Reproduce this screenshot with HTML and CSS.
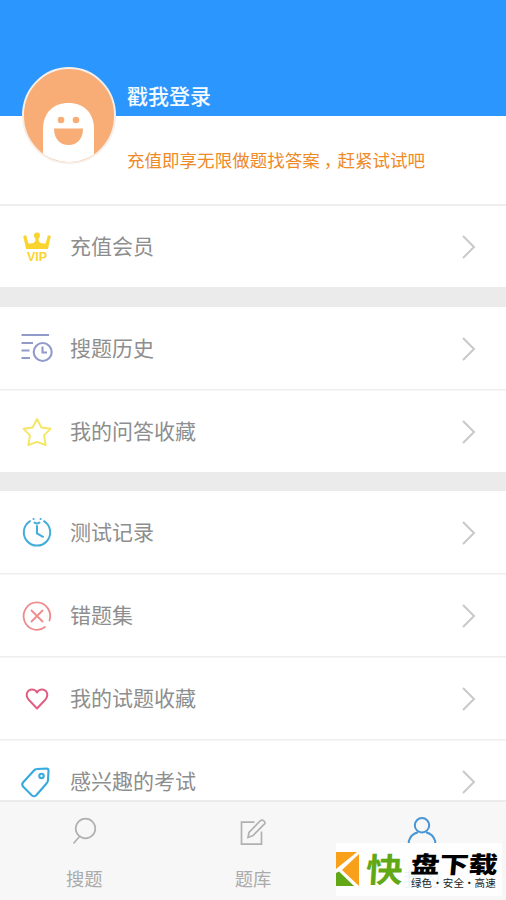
FILE: index.html
```html
<!DOCTYPE html>
<html lang="zh-CN">
<head>
<meta charset="utf-8">
<title>个人中心</title>
<link rel="stylesheet" href="styles.css">
</head>
<body>
<div class="app">
  <header class="profile">
    <svg class="avatar" viewBox="0 0 96 98">
      <defs><clipPath id="face"><ellipse cx="48" cy="48.500" rx="45" ry="46.500"/></clipPath></defs>
      <ellipse cx="48" cy="48.500" rx="46" ry="47.500" fill="#f8ac76" stroke="#f6eee9" stroke-width="2"/>
      <path clip-path="url(#face)" d="M22 98V62C22 46 32 36 47.500 36S73 46 73 62V98Z" fill="#fff"/>
      <circle cx="40" cy="53" r="3.300" fill="#f8ac76"/><circle cx="55" cy="53" r="3.300" fill="#f8ac76"/>
      <path d="M33 61.500H62C62 72 56 78 47.500 78S33 72 33 61.500Z" fill="#f8ac76"/>
    </svg>
    <div class="login">戳我登录</div>
    <div class="promo">充值即享无限做题找答案<span class="comma">，</span>赶紧试试吧</div>
  </header>
  <main class="menu">
    <section class="group">
      <a class="row">
        <svg class="icon" viewBox="0 0 36 36" fill="#fad42e"><path d="M4.500 8l3 0 2 6.500Q16 15 16.500 11L16 7h4l-.5 4Q20 15 26.500 14.500l2-6.500 3 0-2.500 12h-22z"/><circle cx="6" cy="8" r="1.700"/><circle cx="18" cy="6.500" r="3"/><circle cx="30" cy="8" r="1.700"/><text class="vip" x="18" y="31.500" text-anchor="middle">VIP</text></svg>
        <span class="label">充值会员</span><svg class="chevron" viewBox="0 0 14 24"><path d="M1 1l11 11L1 23"/></svg></a>
    </section>
    <section class="group">
      <a class="row">
        <svg class="icon" viewBox="0 0 36 36" fill="none" stroke="#919bcb" stroke-width="2.100"><path d="M2.500 4H30M2.500 12H14M2.500 19.500H10.500M2.500 27H11"/><circle cx="23.700" cy="21" r="9"/><path d="M23.500 15.500V21.500H28"/></svg>
        <span class="label">搜题历史</span><svg class="chevron" viewBox="0 0 14 24"><path d="M1 1l11 11L1 23"/></svg></a>
      <a class="row">
        <svg class="icon" viewBox="0 0 36 36" fill="none" stroke="#f6e562" stroke-width="1.900" stroke-linejoin="round"><path d="M18 5l4.400 8.500 9.100 1.300-6.500 6.600 1.700 9.700-8.700-3.200-8.700 3.200 1.700-9.700-6.500-6.600 9.100-1.300z"/></svg>
        <span class="label">我的问答收藏</span><svg class="chevron" viewBox="0 0 14 24"><path d="M1 1l11 11L1 23"/></svg></a>
    </section>
    <section class="group">
      <a class="row">
        <svg class="icon" viewBox="0 0 36 36" fill="none" stroke="#43addb" stroke-width="2" stroke-linecap="round"><path d="M11 6.200A13.200 13.200 0 1 0 25 6.200M18 11V18.500L24 21.800M15.500 7.500Q18 9.500 20.500 7.500"/><path d="M14.500 4h.1M21.500 4h.1"/></svg>
        <span class="label">测试记录</span><svg class="chevron" viewBox="0 0 14 24"><path d="M1 1l11 11L1 23"/></svg></a>
      <a class="row">
        <svg class="icon" viewBox="0 0 36 36" fill="none" stroke="#ee8b8d" stroke-width="1.800" stroke-linecap="round"><path d="M30.500 22.500A13.300 13.700 0 1 0 26 29M12.500 12.500l11 11M23.500 12.500l-11 11"/></svg>
        <span class="label">错题集</span><svg class="chevron" viewBox="0 0 14 24"><path d="M1 1l11 11L1 23"/></svg></a>
      <a class="row">
        <svg class="icon" viewBox="0 0 36 36" fill="none" stroke="#e15e84" stroke-width="2" stroke-linejoin="round"><path d="M18 27.500L9.500 18.500C5.500 13 9 8.500 13 8.500Q16.500 8.500 18 11.500Q19.500 8.500 23 8.500C27 8.500 30.500 13 26.500 18.500Z"/></svg>
        <span class="label">我的试题收藏</span><svg class="chevron" viewBox="0 0 14 24"><path d="M1 1l11 11L1 23"/></svg></a>
      <a class="row">
        <svg class="icon" viewBox="0 0 36 36" fill="none" stroke="#37a9df" stroke-width="2.100" stroke-linejoin="round"><path d="M18 5L27.500 4.500Q29.500 4.500 29.500 6.500L29 16Q29 18 27.500 19.500L17 31.500Q15 33 13 31.500L4 22.500Q2.500 20.500 4 18.500L14.500 7Q16 5 18 5Z"/><circle cx="22.500" cy="12" r="2.200"/></svg>
        <span class="label">感兴趣的考试</span><svg class="chevron" viewBox="0 0 14 24"><path d="M1 1l11 11L1 23"/></svg></a>
    </section>
  </main>
  <nav class="tabs">
    <a class="tab"><svg viewBox="0 0 30 30"><circle cx="16.500" cy="11.500" r="9.800"/><path d="M10.500 19.500L4.500 26.500"/></svg><span>搜题</span></a>
    <a class="tab"><svg viewBox="0 0 30 30"><path d="M16.500 5.200H3.500V27.200H23.500V14.500"/><path d="M10 20.500L11 15.500 22 4Q24 2 26 4T26 7.500L15 18.500Z"/></svg><span>题库</span></a>
    <a class="tab active"><svg viewBox="0 0 30 30"><circle cx="15" cy="8.300" r="7.200"/><path d="M1.800 26V24Q4 17 11 15.200M19 15.200Q26 17 28.200 24V26"/></svg><span>我的</span></a>
  </nav>
  <div class="stamp">
    <svg class="stamp-logo" viewBox="0 0 24 34"><path d="M0 0H21L0 17Z" fill="#f9a01b"/><path d="M23 2V34L6 18Z" fill="#f9a01b"/><path d="M0 21L3 19.500 18 34H0Z" fill="#62a816"/></svg>
    <span class="stamp-mark">快</span>
    <div class="stamp-text"><div class="stamp-name">盘下载</div><div class="stamp-sub">绿色·安全·高速</div></div>
  </div>
</div>
</body>
</html>
```
FILE: styles.css
```css
* { box-sizing: border-box; }
body { margin: 0; font-family: "Noto Sans CJK SC", sans-serif; background: #fff; }
.app { position: relative; width: 506px; height: 900px; overflow: hidden; display: flex; flex-direction: column; }
.profile {
  height: 206px; flex: none; display: grid;
  grid-template-columns: 96px 1fr; grid-template-rows: 116px 1fr; column-gap: 10px; padding-left: 21px;
  background: linear-gradient(#2b97fe 116px, #fff 116px); border-bottom: 2px solid #eee;
}
.avatar { width: 96px; height: 98px; grid-row: 1 / 3; margin-top: 67px; }
.login { align-self: end; font-size: 21px; line-height: 30px; margin-bottom: 6px; font-weight: 500; color: #f4faff; }
.promo { font-size: 17.550px; line-height: 26px; margin-top: 31px; color: #ee8a27; white-space: nowrap; }
.comma { display: inline-block; width: 1em; padding-left: 4px; }
.menu { flex: 1; min-height: 0; overflow: hidden; }
.group + .group { border-top: 20px solid #ebebeb; }
.group:nth-child(3) { border-top-width: 19px; }
.row { height: 83px; display: flex; align-items: center; padding: 2px 30px 0 19px; }
.group + .group .row:first-child { height: 82px; }
.group:first-child .row { height: 81px; padding-top: 1px; }
.row + .row { box-shadow: inset 0 1.500px #eee; }
.icon { width: 36px; height: 36px; flex: none; }
.vip { font: bold 12.500px "Liberation Sans", sans-serif; }
.label { flex: 1; margin: 0 0 4px 15px; font-size: 21px; line-height: 30px; color: #8e8e8e; }
.chevron { width: 14px; height: 24px; fill: none; stroke: #c9c9c9; stroke-width: 2; }
.tabs { height: 100px; flex: none; display: flex; background: #f7f7f7; border-top: 2px solid #ebebeb; }
.tab { flex: 1; display: flex; flex-direction: column; align-items: center; padding-top: 15px; font-size: 18.300px; line-height: 26px; color: #aaa; }
.tab svg { width: 30px; height: 30px; margin-bottom: 18px; fill: none; stroke: #b1b1b1; stroke-width: 1.700; }
.tab.active { color: #4795dc; }
.tab.active svg { stroke: #4795d5; stroke-width: 2; }
.stamp { position: absolute; left: 336px; top: 843px; width: 166px; height: 53px; display: flex; background: rgba(255, 255, 255, .88); white-space: nowrap; }
.stamp-logo { width: 24px; height: 34px; margin: 9px 6px 0 0; }
.stamp-mark { width: 45px; height: 50px; font-size: 37px; line-height: 50px; font-weight: 700; color: #62a816; transform: scaleY(.9) skewX(-3deg); }
.stamp-name { font-size: 29px; line-height: 24px; height: 24px; margin-top: 8px; font-weight: 900; color: #000; transform: scaleY(.8) skewX(-4deg); }
.stamp-sub { font-size: 10.500px; line-height: 11px; margin-top: 2px; letter-spacing: .1px; color: #222; }
```
